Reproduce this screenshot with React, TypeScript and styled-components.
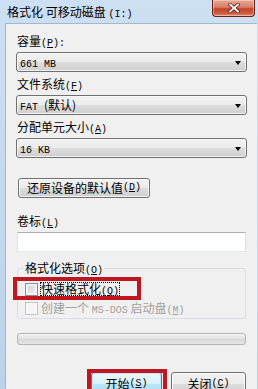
import React from 'react'
import styled, { createGlobalStyle } from 'styled-components'

const GlobalStyle = createGlobalStyle`
    html, body {
        margin: 0;
        padding: 0;
        background: #f0f0f0;
    }
    body {
        font-family: "Noto Sans CJK SC", "Liberation Sans", sans-serif;
        font-size: 12px;
        color: #000;
    }
`

const Window = styled.div`
    position: relative;
    width: 258px;
    height: 389px;
    overflow: hidden;
    display: flex;
    flex-direction: column;
    background: linear-gradient(180deg, #cddff2 0%, #bcd2ea 100%);
`

const TitleBar = styled.div`
    height: 23px;
    flex: none;
    display: flex;
    align-items: flex-start;
    justify-content: space-between;
    padding-left: 7px;
`

const Title = styled.div`
    padding-top: 5px;
    height: 14px;
    line-height: 14px;
    font-size: 12px;
    color: #000;
`

const CloseButton = styled.div`
    width: 43px;
    height: 17px;
    margin-right: 3px;
    box-sizing: border-box;
    border: 1px solid #6d2114;
    border-top: none;
    border-radius: 0 0 4px 4px;
    background: linear-gradient(180deg, #e9a795 0%, #d88168 45%, #c2432a 55%, #cf5f42 85%, #e29a7c 100%);
    box-shadow: inset 0 0 0 1px rgba(255, 255, 255, 0.35);
    display: flex;
    align-items: center;
    justify-content: center;
`

const Client = styled.div`
    flex: 1;
    margin-left: 5px;
    margin-right: 1px;
    border-top: 1px solid #a3b6cb;
    border-left: 1px solid #a3b6cb;
    background: #f0f0f0;
    padding: 10px 10px 0 10px;
    display: flex;
    flex-direction: column;
`

const Label = styled.div<{ $gap?: number }>`
    height: 14px;
    line-height: 14px;
    margin-left: 1px;
    margin-top: ${p => p.$gap ?? 0}px;
    margin-bottom: 4px;
    white-space: nowrap;
`

const Lat = styled.span`
    font-family: "Liberation Mono", "Noto Sans CJK SC", monospace;
    font-size: 10px;
    line-height: 1;
`

const Key = styled.span`
    text-decoration: underline;
`

const winGradient = `linear-gradient(180deg, #f2f2f2 0%, #ebebeb 50%, #dddddd 50%, #cfcfcf 100%)`

const Select = styled.div`
    height: 20px;
    box-sizing: border-box;
    border: 1px solid #707070;
    border-radius: 3px;
    background: ${winGradient};
    box-shadow: inset 0 0 0 1px rgba(255, 255, 255, 0.7);
    display: flex;
    align-items: center;
    justify-content: space-between;
    padding: 0 5px 0 3px;
`

const SelectText = styled.span`
    height: 14px;
    line-height: 14px;
    font-size: 12px;
`

const Arrow = styled.span`
    width: 0;
    height: 0;
    border-left: 3.5px solid transparent;
    border-right: 3.5px solid transparent;
    border-top: 4px solid #000;
    margin-top: 1px;
`

const Button = styled.div<{ $width: number; $default?: boolean }>`
    width: ${p => p.$width}px;
    height: 23px;
    box-sizing: border-box;
    border: 1px solid ${p => (p.$default ? '#3c7fb1' : '#707070')};
    border-radius: 3px;
    background: ${p =>
        p.$default
            ? 'linear-gradient(180deg, #eaf6fd 0%, #d9f0fc 50%, #bee6fd 50%, #a7d9f5 100%)'
            : winGradient};
    box-shadow: inset 0 0 0 1px ${p => (p.$default ? '#c6e6f8' : 'rgba(255,255,255,0.75)')};
    display: flex;
    align-items: center;
    justify-content: center;
    line-height: 14px;
    white-space: nowrap;
`

const RestoreButton = styled(Button)`
    height: 20px;
    margin-left: 2px;
    margin-top: 20px;
`

const TextInput = styled.div`
    height: 20px;
    margin-left: 1px;
    margin-right: 1px;
    box-sizing: border-box;
    border: 1px solid;
    border-color: #abadb3 #dbdfe6 #e3e9ef #e2e3ea;
    background: #fff;
`

const Group = styled.fieldset`
    margin: 9px 1px 0 1px;
    padding: 7px 6px 3px 6px;
    border: 1px solid #d5dfe5;
    border-radius: 3px;
    display: flex;
    flex-direction: column;
    gap: 5px;
    min-width: 0;
`

const Legend = styled.legend`
    padding: 0 1px;
    height: 14px;
    line-height: 14px;
`

const CheckRow = styled.div<{ $disabled?: boolean }>`
    height: 14px;
    margin-left: 1px;
    display: flex;
    align-items: center;
    gap: 2px;
    line-height: 14px;
    white-space: nowrap;
    color: ${p => (p.$disabled ? '#a0a0a0' : '#000')};
`

const Box = styled.span<{ $disabled?: boolean }>`
    width: 13px;
    height: 13px;
    flex: none;
    box-sizing: border-box;
    border: 1px solid ${p => (p.$disabled ? '#c4c4c4' : '#8e8f8f')};
    background: ${p =>
        p.$disabled
            ? '#f4f4f4'
            : 'linear-gradient(135deg, #c5c9cf 0%, #e4e5e7 55%, #f7f7f7 100%)'};
    box-shadow: inset 0 0 0 2px ${p => (p.$disabled ? '#f7f7f7' : '#f3f3f3')};
`

const CheckText = styled.span<{ $focus?: boolean }>`
    height: 14px;
    padding: 0 1px;
    outline: ${p => (p.$focus ? '1px dotted #000' : 'none')};
    outline-offset: -1px;
`

const Progress = styled.div`
    height: 12px;
    margin: 14px 1px 0 1px;
    box-sizing: border-box;
    border: 1px solid #b4b4b4;
    border-radius: 3px;
    background: linear-gradient(180deg, #f4f4f4 0%, #e2e2e2 45%, #d7d7d7 55%, #e6e6e6 100%);
`

const ButtonRow = styled.div`
    margin-top: 27px;
    margin-right: 1px;
    display: flex;
    justify-content: flex-end;
    gap: 9px;
`

// red marks drawn over the screenshot
const Mark = styled.div<{ $x: number; $y: number; $w: number; $h: number }>`
    position: absolute;
    left: ${p => p.$x}px;
    top: ${p => p.$y}px;
    width: ${p => p.$w}px;
    height: ${p => p.$h}px;
    box-sizing: border-box;
    border: 4px solid #c0161f;
    pointer-events: none;
`

const selects = [
    { label: '容量', key: 'P', colon: true, value: <Lat>661 MB</Lat> },
    { label: '文件系统', key: 'F', value: <><Lat>FAT </Lat>(默认)</> },
    { label: '分配单元大小', key: 'A', value: <Lat>16 KB</Lat> },
]

const Hot: React.FC<{ k: string }> = ({ k }) => (
    <Lat>(<Key>{k}</Key>)</Lat>
)

const CloseIcon = () => (
    <svg width="12" height="10" viewBox="0 0 12 10">
        <path d="M2 1.5 L10 8.5 M10 1.5 L2 8.5" stroke="#5b1a10" strokeWidth="3.4" strokeLinecap="square" />
        <path d="M2 1.5 L10 8.5 M10 1.5 L2 8.5" stroke="#fff" strokeWidth="1.8" strokeLinecap="square" />
    </svg>
)

const App: React.FC = () => {
    return (
        <Window>
            <GlobalStyle />
            <TitleBar>
                <Title>格式化 可移动磁盘 <Lat>(I:)</Lat></Title>
                <CloseButton><CloseIcon /></CloseButton>
            </TitleBar>
            <Client>
                {selects.map(({ label, key, colon, value }, i) => (
                    <React.Fragment key={key}>
                        <Label $gap={i === 0 ? 0 : 5}>
                            {label}<Hot k={key} />{colon && <Lat>:</Lat>}
                        </Label>
                        <Select>
                            <SelectText>{value}</SelectText>
                            <Arrow />
                        </Select>
                    </React.Fragment>
                ))}
                <RestoreButton $width={132}>还原设备的默认值<Hot k="D" /></RestoreButton>
                <Label $gap={16}>卷标<Hot k="L" /></Label>
                <TextInput />
                <Group>
                    <Legend>格式化选项<Hot k="O" /></Legend>
                    <CheckRow>
                        <Box />
                        <CheckText $focus>快速格式化<Hot k="Q" /></CheckText>
                    </CheckRow>
                    <CheckRow $disabled>
                        <Box $disabled />
                        <CheckText>创建一个 <Lat>MS-DOS</Lat> 启动盘<Hot k="M" /></CheckText>
                    </CheckRow>
                </Group>
                <Progress />
                <ButtonRow>
                    <Button $width={71} $default>开始<Hot k="S" /></Button>
                    <Button $width={75}>关闭<Hot k="C" /></Button>
                </ButtonRow>
            </Client>
            <Mark $x={13} $y={277} $w={128} $h={23} />
            <Mark $x={87} $y={369} $w={80} $h={26} />
        </Window>
    )
}

export default App
